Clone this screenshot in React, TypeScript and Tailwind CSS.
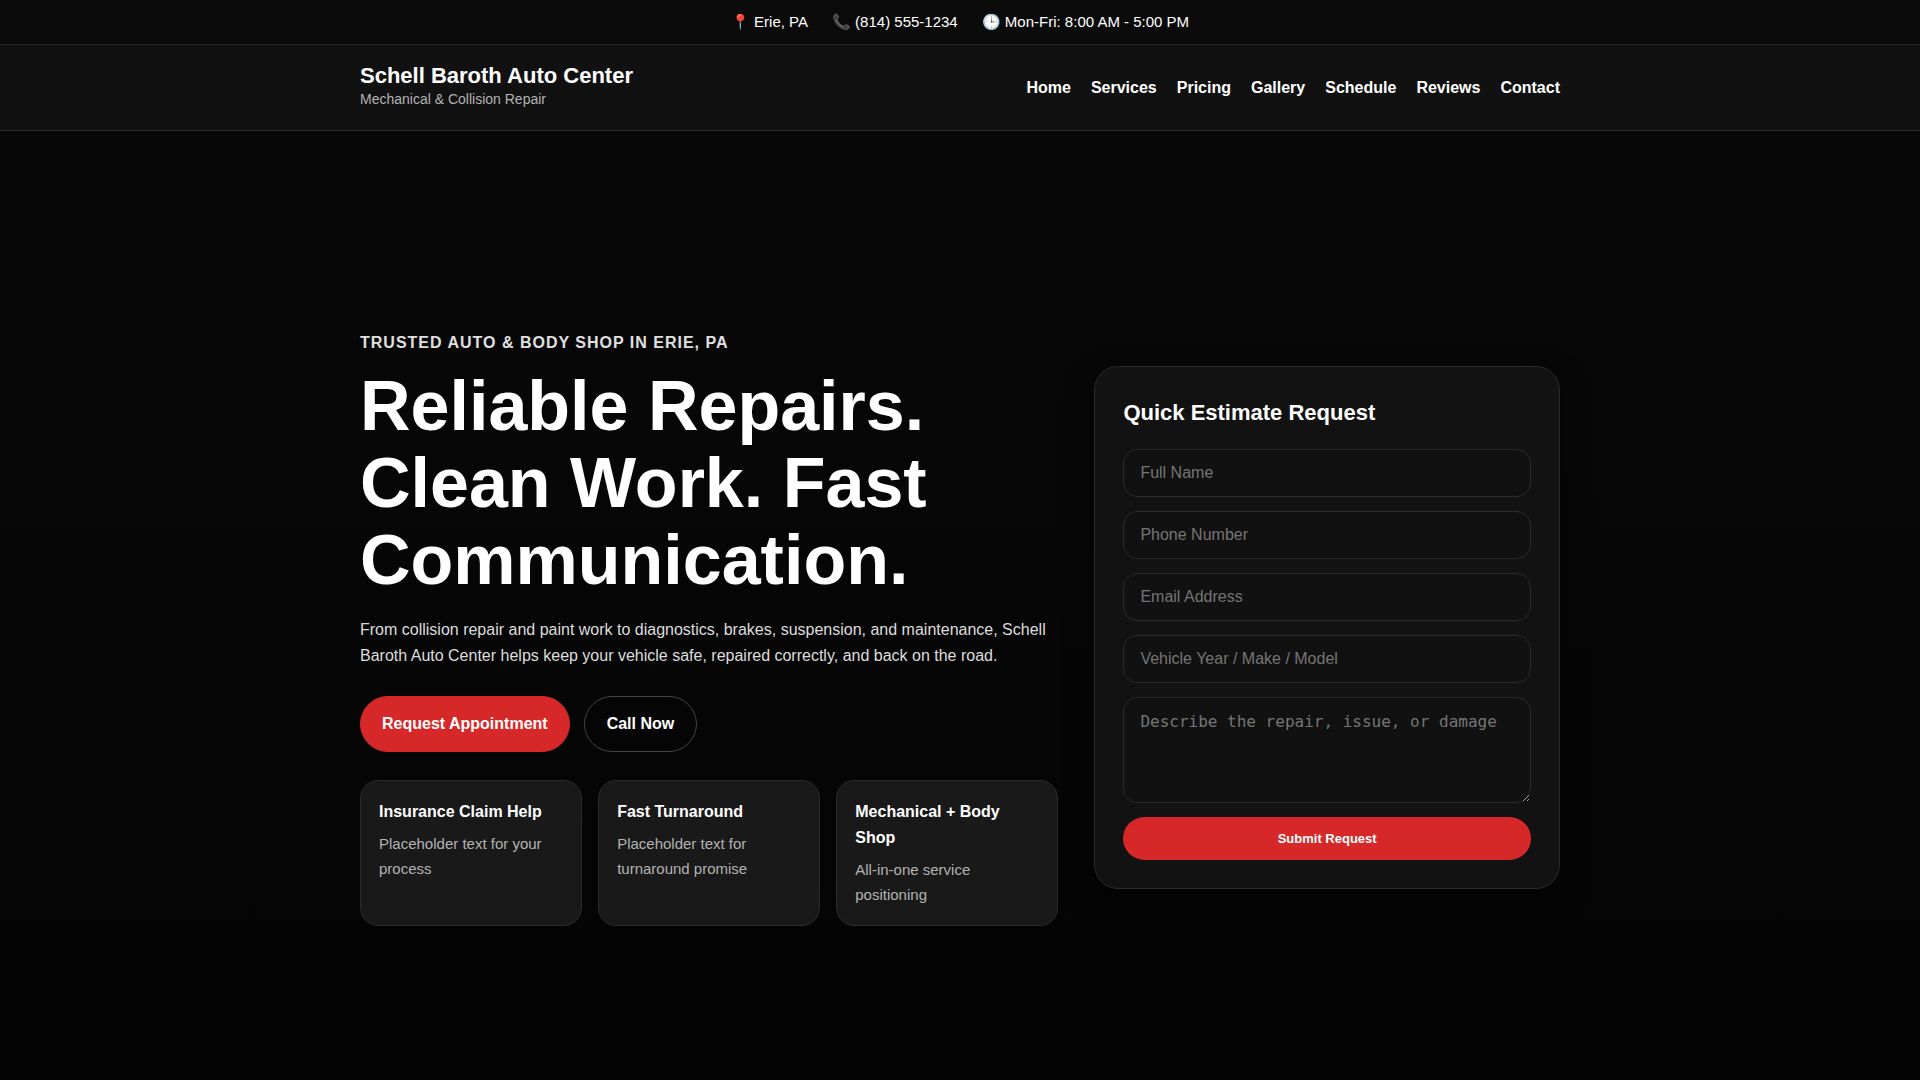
import React from 'react';

const navLinks = ['Home', 'Services', 'Pricing', 'Gallery', 'Schedule', 'Reviews', 'Contact'];

const highlights = [
  { title: 'Insurance Claim Help', text: 'Placeholder text for your process' },
  { title: 'Fast Turnaround', text: 'Placeholder text for turnaround promise' },
  { title: 'Mechanical + Body Shop', text: 'All-in-one service positioning' },
];

const fields = [
  { name: 'name', type: 'text', label: 'Full Name' },
  { name: 'phone', type: 'tel', label: 'Phone Number' },
  { name: 'email', type: 'email', label: 'Email Address' },
  { name: 'vehicle', type: 'text', label: 'Vehicle Year / Make / Model' },
];

const fieldClass =
  'block w-full rounded-[14px] border border-[#2a2a2a] bg-[#111111] px-4 text-base text-white placeholder:text-[#757575] focus:outline-none focus:border-[#d62828]';

const TopBar = () => (
  <div className="flex flex-wrap justify-center gap-x-6 border-b border-[#222222] bg-[#0b0b0b] px-4 py-2.5 text-[15px] leading-6">
    <span>📍 Erie, PA</span>
    <span>📞 (814) 555-1234</span>
    <span>🕒 Mon-Fri: 8:00 AM - 5:00 PM</span>
  </div>
);

const Header = () => (
  <header className="border-b border-[#2a2a2a] bg-[#111111] px-4 py-[18px]">
    <div className="mx-auto flex max-w-[1200px] flex-wrap items-center justify-between gap-4">
      <div className="pb-[3px]">
        <p className="text-[22px] font-bold leading-[26px]">Schell Baroth Auto Center</p>
        <p className="text-sm leading-5 text-[#b3b3b3]">Mechanical &amp; Collision Repair</p>
      </div>
      <nav className="flex flex-wrap gap-5 font-bold">
        {navLinks.map((link) => (
          <a key={link} href={`#${link.toLowerCase()}`} className="hover:text-[#d62828]">
            {link}
          </a>
        ))}
      </nav>
    </div>
  </header>
);

const EstimateForm = () => (
  <form
    onSubmit={(e: React.FormEvent) => e.preventDefault()}
    className="rounded-3xl border border-[#2a2a2a] bg-[#121212] p-7 shadow-[0_10px_30px_rgba(0,0,0,0.45)]"
  >
    <h2 className="mb-[18px] text-[22px] font-bold leading-9">Quick Estimate Request</h2>
    <div className="grid gap-3.5">
      {fields.map((field) => (
        <input
          key={field.name}
          name={field.name}
          type={field.type}
          aria-label={field.label}
          placeholder={field.label}
          className={`${fieldClass} h-12`}
        />
      ))}
      <textarea
        name="details"
        aria-label="Describe the repair, issue, or damage"
        placeholder="Describe the repair, issue, or damage"
        className={`${fieldClass} h-[106px] resize-y py-3.5 font-['DejaVu_Sans_Mono',monospace] leading-5`}
      />
      <button
        type="submit"
        className="rounded-full bg-[#d62828] py-3 text-[13px] font-bold leading-[19px] hover:bg-[#b71f1f]"
      >
        Submit Request
      </button>
    </div>
  </form>
);

const Hero = () => (
  <section
    id="home"
    className="flex min-h-[92vh] items-center bg-linear-to-b from-[#080808] to-[#040404] px-4"
  >
    <div className="mx-auto grid w-full max-w-[1200px] items-center gap-9 lg:grid-cols-[3fr_2fr]">
      <div>
        <p className="mb-3 font-bold uppercase leading-[26px] tracking-[1px] text-[#e0e0e0]">
          Trusted Auto &amp; Body Shop in Erie, PA
        </p>
        <h1 className="mb-[18px] text-[70px] font-bold leading-[77px]">
          Reliable Repairs. Clean Work. Fast Communication.
        </h1>
        <p className="leading-[26px] text-[#dddddd]">
          From collision repair and paint work to diagnostics, brakes, suspension, and maintenance, Schell Baroth
          Auto Center helps keep your vehicle safe, repaired correctly, and back on the road.
        </p>

        <div className="mb-7 mt-[27px] flex flex-wrap gap-3.5 font-bold leading-[26px]">
          <a href="#schedule" className="rounded-full border border-[#d62828] bg-[#d62828] px-[21px] py-3.5">
            Request Appointment
          </a>
          <a href="tel:8145551234" className="rounded-full border border-[#444444] px-[22px] py-3.5">
            Call Now
          </a>
        </div>

        <div className="grid gap-4 sm:grid-cols-3">
          {highlights.map((item) => (
            <div key={item.title} className="rounded-[18px] border border-[#2a2a2a] bg-[#191919] p-[18px]">
              <h3 className="mb-1.5 font-bold leading-[26px]">{item.title}</h3>
              <p className="text-[15px] leading-[25px] text-[#b3b3b3]">{item.text}</p>
            </div>
          ))}
        </div>
      </div>

      <EstimateForm />
    </div>
  </section>
);

export default function App() {
  return (
    <div className="min-h-screen bg-[#040404] font-['Liberation_Sans',Arial,sans-serif] text-white">
      <TopBar />
      <Header />
      <Hero />
    </div>
  );
}
